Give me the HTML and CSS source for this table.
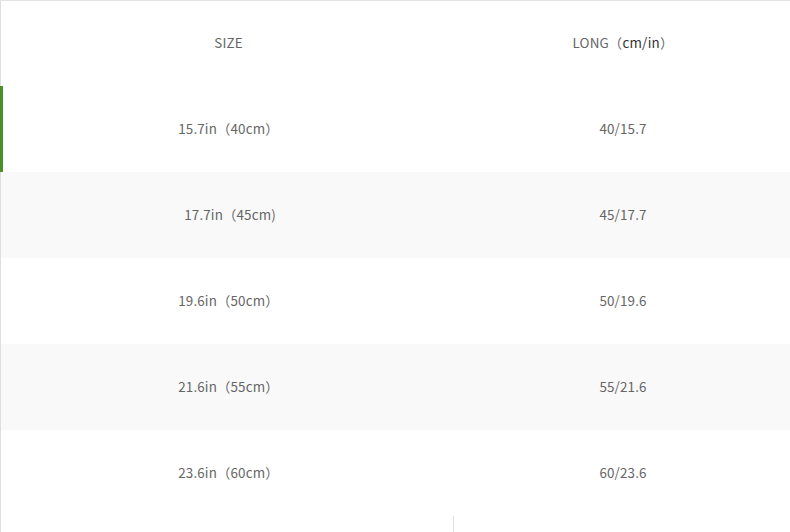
FILE: index.html
```html
<!DOCTYPE html>
<html>
<head>
<meta charset="utf-8">
<link rel="stylesheet" href="styles.css">
</head>
<body>
<div class="table">
  <div class="row head">
    <div class="cell c1">SIZE</div>
    <div class="cell c2">LONG（<span class="dark">cm/in</span>）</div>
  </div>
  <div class="row active">
    <div class="cell c1">15.7in（40cm）</div>
    <div class="cell c2">40/15.7</div>
  </div>
  <div class="row alt">
    <div class="cell c1">&nbsp;17.7in（45cm)</div>
    <div class="cell c2">45/17.7</div>
  </div>
  <div class="row">
    <div class="cell c1">19.6in（50cm）</div>
    <div class="cell c2">50/19.6</div>
  </div>
  <div class="row alt">
    <div class="cell c1">21.6in（55cm）</div>
    <div class="cell c2">55/21.6</div>
  </div>
  <div class="row">
    <div class="cell c1">23.6in（60cm）</div>
    <div class="cell c2">60/23.6</div>
  </div>
  <div class="foot">
    <div class="foot-left"></div>
    <div class="foot-right"></div>
  </div>
</div>
</body>
</html>
```
FILE: styles.css
```css
html, body {
  margin: 0;
  padding: 0;
  background: #fff;
}
body {
  font-family: "Noto Sans CJK SC", "Noto Sans", sans-serif;
  font-size: 13.4px;
  color: #666;
  overflow: hidden;
}
.table {
  border-top: 1px solid #e3e3e3;
  border-left: 1px solid #dedede;
  height: 531px;
  display: flex;
  flex-direction: column;
}
.row {
  display: grid;
  grid-template-columns: 455px 1fr;
  height: 86px;
  align-items: center;
  position: relative;
}
.row.head {
  height: 85px;
}
.row.alt {
  background: #f9f9f9;
}
.row.active::before {
  content: "";
  position: absolute;
  left: -1px;
  top: 0;
  bottom: 0;
  width: 3px;
  background: #4b8f27;
}
.cell {
  text-align: center;
  line-height: 20px;
  letter-spacing: 0.15px;
  padding-bottom: 2px;
}
.head .cell {
  padding-bottom: 4px;
}
.dark {
  color: #333;
}
.foot {
  flex: 1;
  display: grid;
  grid-template-columns: 453px 1fr;
}
.foot-left {
  border-right: 1px solid #e0e0e0;
}
```
